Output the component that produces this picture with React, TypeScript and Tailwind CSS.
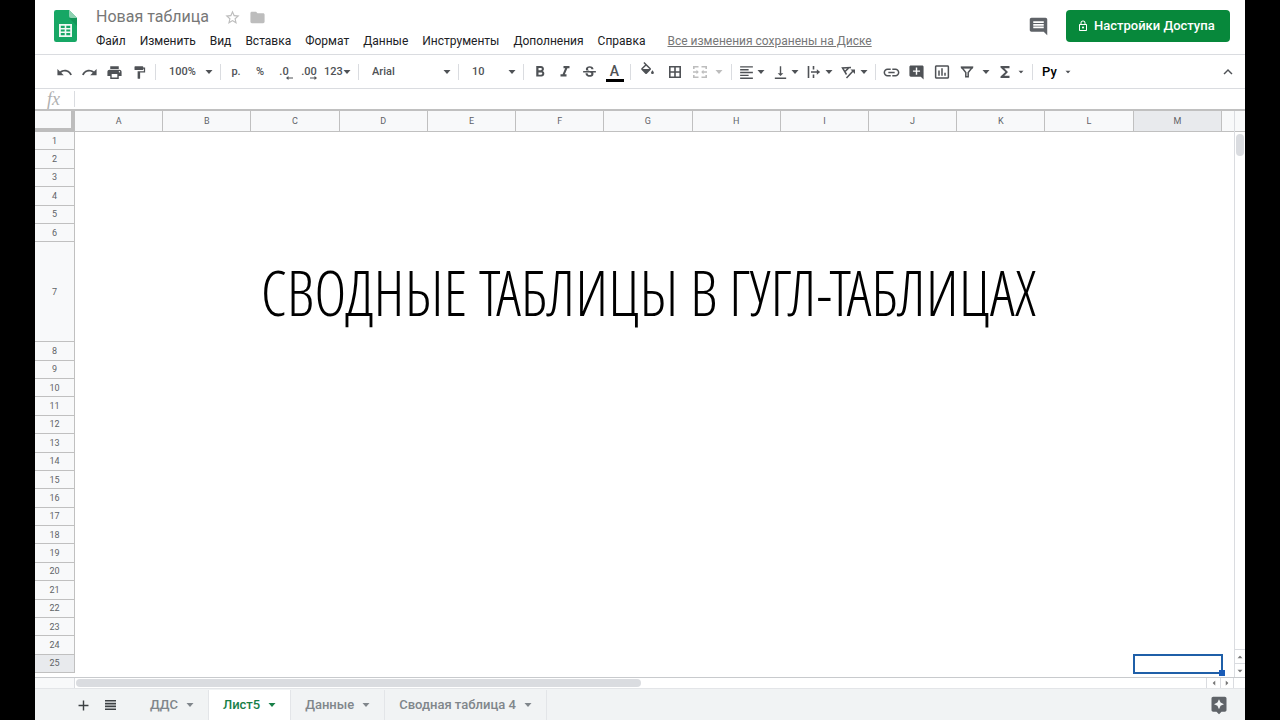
import { useState } from 'react';
import type { ReactNode } from 'react';
import {
  MdAdd,
  MdAddComment,
  MdAssistant,
  MdComment,
  MdFolder,
  MdFormatAlignLeft,
  MdFormatBold,
  MdFormatItalic,
  MdFormatPaint,
  MdFunctions,
  MdInsertChartOutlined,
  MdInsertLink,
  MdKeyboardArrowUp,
  MdLockOutline,
  MdPrint,
  MdRedo,
  MdStarBorder,
  MdStrikethroughS,
  MdUndo,
  MdVerticalAlignBottom,
} from 'react-icons/md';

const menus = [
  'Файл',
  'Изменить',
  'Вид',
  'Вставка',
  'Формат',
  'Данные',
  'Инструменты',
  'Дополнения',
  'Справка',
];

const columns = 'ABCDEFGHIJKLM'.split('');
const rows = Array.from({ length: 25 }, (_, i) => i + 1);
const tabs = ['ДДС', 'Лист5', 'Данные', 'Сводная таблица 4'];

const Caret = ({ className = '' }: { className?: string }) => (
  <svg viewBox="0 0 8 4" className={`h-1 w-2 shrink-0 fill-current ${className}`}>
    <path d="M0.500 0h7L4 4z" />
  </svg>
);

const Separator = () => <span className="mx-[3px] h-4 w-px shrink-0 bg-[#dadce0]" />;

const ToolButton = ({
  label,
  className = 'w-[25px] justify-center',
  children,
}: {
  label: string;
  className?: string;
  children: ReactNode;
}) => (
  <button
    type="button"
    aria-label={label}
    className={`flex h-6 shrink-0 items-center rounded-sm hover:bg-gray-100 ${className}`}
  >
    {children}
  </button>
);

const ToolSelect = ({
  label,
  options,
  className,
}: {
  label: string;
  options: string[];
  className: string;
}) => (
  <div className={`relative flex h-6 shrink-0 items-center ${className}`}>
    <select
      aria-label={label}
      className="h-6 w-full appearance-none bg-transparent pl-[10px] text-[11px] font-medium outline-none"
    >
      {options.map((option) => (
        <option key={option}>{option}</option>
      ))}
    </select>
    <Caret className="pointer-events-none absolute right-1" />
  </div>
);

const SheetsLogo = () => (
  <svg viewBox="0 0 23 32" className="h-8 w-[23px] shrink-0">
    <path d="M2.200 0H15l8 8v21.800a2.200 2.200 0 0 1-2.200 2.200H2.200A2.200 2.200 0 0 1 0 29.800V2.200A2.200 2.200 0 0 1 2.200 0z" fill="#17a765" />
    <path d="M15 8h8v8z" fill="#129558" />
    <path d="M15 0l8 8h-6a2 2 0 0 1-2-2z" fill="#8ed1b1" />
    <path
      d="M5 14h13v13H5zM6.800 15.800v2.200h3.900v-2.200zM12.300 15.800v2.200h3.900v-2.200zM6.800 19.400v2.200h3.900v-2.200zM12.300 19.400v2.200h3.900v-2.200zM6.800 23v2.200h3.900V23zM12.300 23v2.200h3.900V23z"
      fill="#f1f8f4"
      fillRule="evenodd"
    />
  </svg>
);

const FillIcon = () => (
  <svg viewBox="0 0 24 24" className="-mt-1 h-[17px] w-[17px] shrink-0 fill-current">
    <path d="M16.560 8.940L7.620 0 6.210 1.410l2.380 2.380-5.150 5.150c-.59.59-.59 1.540 0 2.120l5.500 5.500c.29.29.68.44 1.060.44s.77-.15 1.060-.44l5.500-5.500c.59-.58.59-1.530 0-2.120zM5.210 10L10 5.210 14.790 10H5.210zM19 11.500s-2 2.170-2 3.500c0 1.100.9 2 2 2s2-.9 2-2c0-1.330-2-3.500-2-3.500z" />
  </svg>
);

const BordersIcon = () => (
  <svg viewBox="0 0 12 12" className="h-3 w-3 shrink-0" fill="none" stroke="currentColor" strokeWidth="1.600">
    <path d="M.8.8h10.400v10.400H.8zM6 .8v10.400M.8 6h10.400" />
  </svg>
);

const MergeIcon = () => (
  <svg viewBox="0 0 16 14" className="h-[14px] w-4 shrink-0" fill="none" stroke="currentColor" strokeWidth="1.600">
    <path d="M1.800 4V1.800H6.500M9.500 1.800h4.700V4M1.800 10v2.200h4.700M9.500 12.200h4.700V10M1 7h4.500M15 7h-4.500" />
    <path d="M4.500 4.800L6.800 7 4.500 9.200zM11.500 4.800L9.200 7l2.300 2.200z" fill="currentColor" stroke="none" />
  </svg>
);

const OverflowIcon = () => (
  <svg viewBox="0 0 14 14" className="h-[14px] w-[14px] shrink-0" fill="none" stroke="currentColor" strokeWidth="1.600">
    <path d="M1.500 1v12M6.500 1v3.500M6.500 9.500V13M4 7h6.500" />
    <path d="M9.800 4.300L13.200 7l-3.400 2.700z" fill="currentColor" stroke="none" />
  </svg>
);

const RotateIcon = () => (
  <svg viewBox="0 0 15 13" className="h-[13px] w-[15px] shrink-0" fill="none" stroke="currentColor" strokeWidth="1.500">
    <path d="M10 1.500L1.500 2l4 6.500M8 1.600L3.800 5.800M5.500 12l7-7.500" />
    <path d="M9.500 3.500h4.500V8z" fill="currentColor" stroke="none" />
  </svg>
);

const FilterIcon = () => (
  <svg viewBox="0 0 14 12" className="h-3 w-[14px] shrink-0" fill="none" stroke="currentColor" strokeWidth="1.500">
    <path d="M1.800 1.500h10.400L8.200 6.500v4.300H5.800V6.500z" />
    <path d="M1 1.500h12" strokeWidth="2" />
  </svg>
);

const ListIcon = () => (
  <svg viewBox="0 0 11 10" className="h-[10px] w-[11px] shrink-0 fill-current">
    <path d="M0 0h11v1.600H0zM0 2.800h11v1.600H0zM0 5.600h11v1.600H0zM0 8.400h11V10H0z" />
  </svg>
);

const DecimalArrow = ({ className }: { className: string }) => (
  <svg viewBox="0 0 7 4" className={`absolute bottom-0 h-1 w-[7px] ${className}`}>
    <path d="M0 2l2.500-2v1.400H7v1.200H2.500V4z" fill="currentColor" />
  </svg>
);

const Header = () => {
  const [title, setTitle] = useState('Новая таблица');

  return (
    <header className="flex h-[55px] shrink-0 items-start border-b border-[#dadce0] pt-[10px] pr-[15px] pl-[19px]">
      <SheetsLogo />
      <div className="-mt-1 ml-[19px]">
        <div className="flex h-[22px] items-center text-[#bdbdbd]">
          <input
            aria-label="Название таблицы"
            value={title}
            onChange={(e) => setTitle(e.target.value)}
            className="w-32 text-base text-[#777777] outline-none"
          />
          <button type="button" aria-label="Пометить">
            <MdStarBorder size={17} />
          </button>
          <button type="button" aria-label="Переместить" className="ml-2">
            <MdFolder size={17} />
          </button>
        </div>
        <nav className="mt-[3px] flex h-5 items-center gap-[14px] text-xs whitespace-nowrap text-[#202124]">
          {menus.map((menu) => (
            <button key={menu} type="button">
              {menu}
            </button>
          ))}
          <a href="#" className="ml-2 text-[#777777] underline">
            Все изменения сохранены на Диске
          </a>
        </nav>
      </div>
      <button type="button" aria-label="Комментарии" className="mt-[6px] ml-auto text-[#5f6368]">
        <MdComment size={21} />
      </button>
      <button
        type="button"
        className="ml-[17px] flex h-8 w-[164px] items-center gap-[5px] rounded bg-[#07883b] pl-[11px] text-[13px] font-medium whitespace-nowrap text-white"
      >
        <MdLockOutline size={12} />
        Настройки Доступа
      </button>
    </header>
  );
};

const Toolbar = () => (
  <div className="flex h-[34px] shrink-0 items-center border-b border-[#dadce0] pt-px pr-2 pl-[17px] text-[11px] font-medium text-[#4f5256]">
    <ToolButton label="Отменить"><MdUndo size={17} /></ToolButton>
    <ToolButton label="Повторить"><MdRedo size={17} /></ToolButton>
    <ToolButton label="Печать"><MdPrint size={17} /></ToolButton>
    <ToolButton label="Копировать форматирование"><MdFormatPaint size={15} /></ToolButton>
    <Separator />
    <ToolSelect label="Масштаб" options={['100%', '75%', '50%']} className="w-[58px]" />
    <Separator />
    <ToolButton label="Денежный формат" className="w-6 justify-center">р.</ToolButton>
    <ToolButton label="Процентный формат" className="w-6 justify-center">%</ToolButton>
    <ToolButton label="Уменьшить число знаков" className="w-6 justify-center">
      <span className="relative">.0<DecimalArrow className="-right-1" /></span>
    </ToolButton>
    <ToolButton label="Увеличить число знаков" className="w-[26px] justify-center">
      <span className="relative">.00<DecimalArrow className="right-0 rotate-180" /></span>
    </ToolButton>
    <ToolButton label="Другие форматы" className="w-[33px] pl-[2px]">
      123<Caret />
    </ToolButton>
    <Separator />
    <ToolSelect label="Шрифт" options={['Arial', 'Roboto', 'Verdana']} className="w-[93px]" />
    <Separator />
    <ToolSelect label="Размер шрифта" options={['10', '11', '12']} className="w-[58px]" />
    <Separator />
    <ToolButton label="Полужирный"><MdFormatBold size={18} /></ToolButton>
    <ToolButton label="Курсив"><MdFormatItalic size={18} /></ToolButton>
    <ToolButton label="Зачеркнутый"><MdStrikethroughS size={17} /></ToolButton>
    <ToolButton label="Цвет текста">
      <span className="w-[18px] border-b-[3px] border-black text-center text-sm leading-4">A</span>
    </ToolButton>
    <Separator />
    <ToolButton label="Цвет заливки" className="w-[27px] justify-center"><FillIcon /></ToolButton>
    <ToolButton label="Границы" className="w-[27px] justify-center"><BordersIcon /></ToolButton>
    <ToolButton label="Объединить ячейки" className="w-10 justify-between pr-[5px] pl-1 text-[#bdbdbd]">
      <MergeIcon /><Caret />
    </ToolButton>
    <Separator />
    <ToolButton label="Выравнивание по горизонтали" className="w-[34px] justify-between pr-1 pl-[3px]">
      <MdFormatAlignLeft size={17} /><Caret />
    </ToolButton>
    <ToolButton label="Выравнивание по вертикали" className="w-[34px] justify-between pr-1 pl-[3px]">
      <MdVerticalAlignBottom size={17} /><Caret />
    </ToolButton>
    <ToolButton label="Перенос текста" className="w-[34px] justify-between pr-1 pl-1">
      <OverflowIcon /><Caret />
    </ToolButton>
    <ToolButton label="Поворот текста" className="w-[35px] justify-between pr-1 pl-1">
      <RotateIcon /><Caret />
    </ToolButton>
    <Separator />
    <ToolButton label="Вставить ссылку"><MdInsertLink size={19} /></ToolButton>
    <ToolButton label="Добавить комментарий"><MdAddComment size={17} /></ToolButton>
    <ToolButton label="Вставить диаграмму"><MdInsertChartOutlined size={18} /></ToolButton>
    <ToolButton label="Фильтр" className="w-10 justify-between pr-1 pl-[6px]">
      <FilterIcon /><Caret />
    </ToolButton>
    <ToolButton label="Функции" className="w-[35px] justify-between pr-1 pl-[2px]">
      <MdFunctions size={18} /><Caret className="scale-75" />
    </ToolButton>
    <Separator />
    <ToolButton label="Способ ввода" className="w-10 justify-between pr-1 pl-[6px]">
      <span className="text-[13px] text-black">Ру</span><Caret className="scale-75" />
    </ToolButton>
    <ToolButton label="Скрыть меню" className="ml-auto"><MdKeyboardArrowUp size={18} /></ToolButton>
  </div>
);

const Sheet = () => (
  <table className="h-full w-full table-fixed border-separate border-spacing-0 text-[9px] leading-none text-[#5f6368]">
    <colgroup>
      <col className="w-10" />
      {columns.map((column) => (
        <col key={column} />
      ))}
      <col className="w-3" />
    </colgroup>
    <thead>
      <tr className="h-[21px] bg-[#f8f9fa]">
        <td className="border-r-4 border-b-4 border-[#bdbdbd] p-0" />
        {columns.map((column) => (
          <th
            key={column}
            scope="col"
            className={`border-r border-b border-[#c0c0c0] p-0 font-normal ${column === 'M' ? 'bg-[#e8eaed]' : ''}`}
          >
            {column}
          </th>
        ))}
        <td className="border-b border-[#c0c0c0] p-0" />
      </tr>
    </thead>
    <tbody>
      {rows.map((row) => (
        <tr key={row} className={row === 7 ? 'h-[100px]' : ''}>
          <th
            scope="row"
            className={`border-r border-b border-[#c0c0c0] p-0 pt-px font-normal ${row === 25 ? 'bg-[#e8eaed]' : 'bg-[#f8f9fa]'}`}
          >
            {row}
          </th>
          {row === 7 && (
            <>
              <td colSpan={2} className="p-0" />
              <td
                colSpan={9}
                className="p-0 text-center font-['Open_Sans_Condensed_Light','Open_Sans',sans-serif] text-[62px] whitespace-nowrap text-black"
              >
                СВОДНЫЕ ТАБЛИЦЫ В ГУГЛ-ТАБЛИЦАХ
              </td>
              <td colSpan={3} className="p-0" />
            </>
          )}
          {row === 25 && (
            <>
              <td colSpan={12} className="p-0" />
              <td className="relative p-0 outline-2 -outline-offset-1 outline-[#1f5fa8]">
                <span className="absolute -right-[3px] -bottom-[3px] h-[6px] w-[6px] bg-[#1a5cb8]" />
              </td>
              <td className="p-0" />
            </>
          )}
          {row !== 7 && row !== 25 && <td colSpan={14} className="p-0" />}
        </tr>
      ))}
    </tbody>
  </table>
);

const SheetTabs = () => {
  const [active, setActive] = useState('Лист5');

  return (
    <footer className="flex h-8 shrink-0 items-center border-t border-[#e3e5e8] bg-[#f1f3f4] pt-px pl-10 text-[13px] font-medium text-[#80868b]">
      <button type="button" aria-label="Добавить лист" className="text-[#3c4043]">
        <MdAdd size={17} />
      </button>
      <button type="button" aria-label="Все листы" className="mr-5 ml-[13px] text-[#3c4043]">
        <ListIcon />
      </button>
      {tabs.map((tab) => (
        <button
          key={tab}
          type="button"
          onClick={() => setActive(tab)}
          className={`flex h-full items-center gap-2 border-r border-[#e3e5e8] px-[14px] whitespace-nowrap ${
            tab === active ? 'bg-white text-[#188048]' : ''
          }`}
        >
          {tab}
          <Caret />
        </button>
      ))}
      <button type="button" aria-label="Анализ данных" className="mr-4 ml-auto text-[#5f6368]">
        <MdAssistant size={20} />
      </button>
    </footer>
  );
};

const App = () => {
  return (
    <div className="h-screen bg-black px-[35px] font-['Roboto','Liberation_Sans',sans-serif]">
      <div className="flex h-full flex-col overflow-hidden bg-white">
        <Header />
        <Toolbar />
        <div className="flex h-[22px] shrink-0 items-center border-b-2 border-[#c0c0c0]">
          <label
            htmlFor="formula"
            className="w-10 border-r border-[#dadce0] pl-3 font-['Liberation_Serif',serif] text-lg leading-4 text-[#b0b0b0] italic"
          >
            fx
          </label>
          <input id="formula" type="text" className="h-4 min-w-0 flex-1 px-2 text-xs outline-none" />
        </div>
        <main className="flex min-h-0 flex-1 flex-col">
          <div className="flex min-h-0 flex-1">
            <div className="min-w-0 flex-1 pb-1">
              <Sheet />
            </div>
            <div className="flex w-[11px] shrink-0 flex-col items-center border-l border-[#dadce0] text-[#777777]">
              <div className="h-[21px] w-full shrink-0 border-b border-[#c0c0c0] bg-[#f8f9fa]" />
              <div className="mt-[2px] h-[22px] w-2 rounded-full bg-[#dadce0]" />
              <button type="button" aria-label="Вверх" className="mt-auto flex h-[14px] w-full items-center justify-center border-t border-[#dadce0]">
                <Caret className="scale-75 rotate-180" />
              </button>
              <button type="button" aria-label="Вниз" className="flex h-[14px] w-full items-center justify-center border-t border-[#dadce0]">
                <Caret className="scale-75" />
              </button>
            </div>
          </div>
          <div className="flex h-[11px] shrink-0 items-center border-t border-[#c8cacd] pr-[11px] text-[#777777]">
            <div className="h-full w-10 border-r border-[#dadce0] bg-[#f8f9fa]" />
            <div className="flex-1 pl-px">
              <div className="h-2 w-1/2 rounded-full bg-[#dadce0]" />
            </div>
            <button type="button" aria-label="Влево" className="flex h-full w-[14px] items-center justify-center border-l border-[#dadce0]">
              <Caret className="scale-75 rotate-90" />
            </button>
            <button type="button" aria-label="Вправо" className="flex h-full w-[14px] items-center justify-center border-x border-[#dadce0]">
              <Caret className="scale-75 -rotate-90" />
            </button>
          </div>
        </main>
        <SheetTabs />
      </div>
    </div>
  );
};

export default App;
